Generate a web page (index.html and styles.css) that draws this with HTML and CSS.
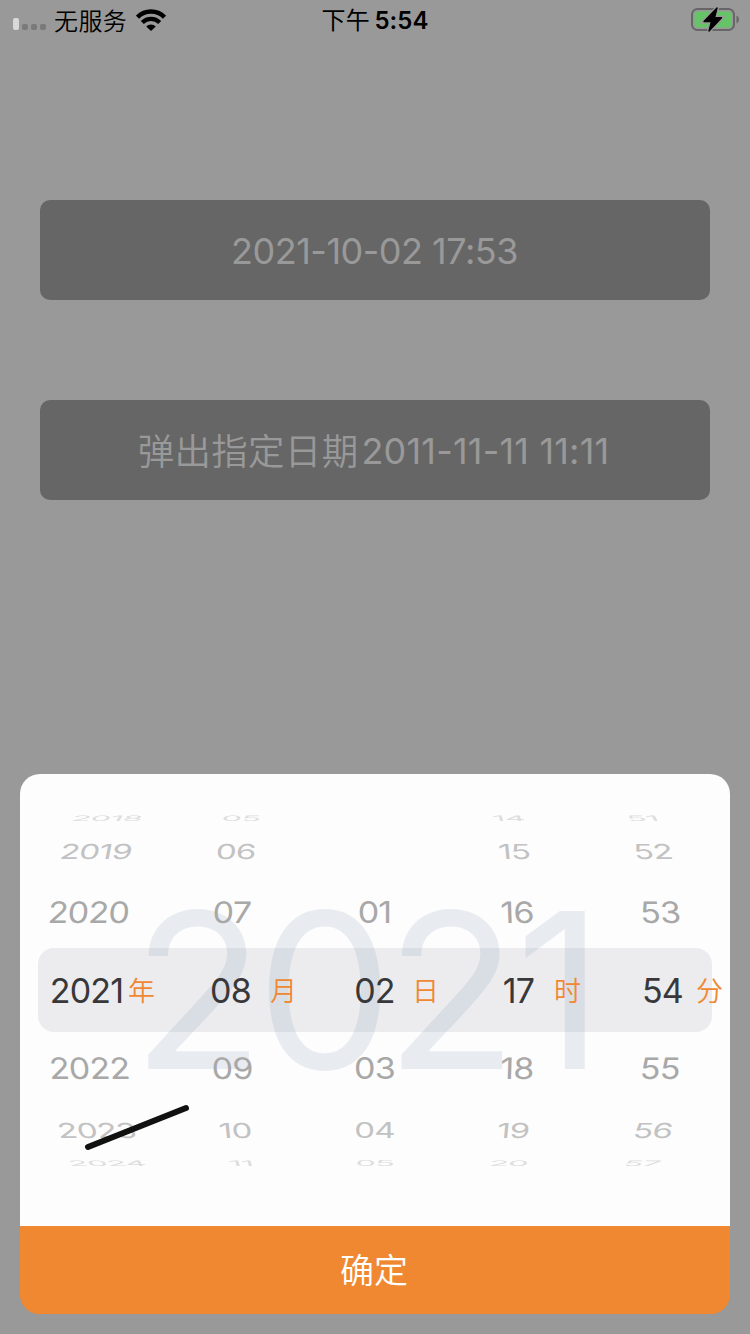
FILE: index.html
```html
<!DOCTYPE html>
<html lang="zh-CN">
<head>
<meta charset="utf-8">
<title>日期选择</title>
<link rel="stylesheet" href="styles.css">
</head>
<body>
<header class="status">
  <div class="carrier">
    <span class="signal"><i class="bar on"></i><i class="bar"></i><i class="bar"></i><i class="bar"></i></span>
    <span class="carrier-name">无服务</span>
    <svg class="wifi" width="30" height="22" viewBox="0 0 30 22">
      <path d="M1.500 8.200A19 19 0 0 1 28.500 8.200" fill="none" stroke="#000" stroke-width="4.400"/>
      <path d="M6.300 13.400A12.300 12.300 0 0 1 23.700 13.400" fill="none" stroke="#000" stroke-width="4.200"/>
      <path d="M15 22L10.200 17.400A6.800 6.800 0 0 1 19.800 17.400Z"/>
    </svg>
  </div>
  <div class="time"><span class="cjk">下午</span><span>5:54</span></div>
  <svg class="battery" width="50" height="26" viewBox="0 0 50 26">
    <rect x="2" y="3" width="42" height="21" rx="5.500" fill="none" stroke="#666" stroke-width="2"/>
    <rect x="4.500" y="5.500" width="37" height="16" rx="3.500" fill="#65c466"/>
    <path d="M46.500 9.500Q49 10.500 49 13.500T46.500 17.500Z" fill="#666"/>
    <path d="M27 2L14 15.500H21.500L19 25L31.500 11.800H24.500Z" fill="#000" stroke="#999" stroke-width="4" paint-order="stroke"/>
    <path d="M27 2L14 15.500H21.500L19 25L31.500 11.800H24.500Z" fill="#000" stroke="#000" stroke-width="1.400" stroke-linejoin="round"/>
  </svg>
</header>
<main class="buttons">
  <div class="date-button"><span class="num now">2021-10-02 17:53</span></div>
  <div class="date-button"><span class="cjk label">弹出指定日期</span><span class="num given">2011-11-11 11:11</span></div>
</main>
<section class="sheet">
  <div class="picker">
    <div class="watermark">202<span class="one">1</span></div>
    <div class="band"></div>
    <div class="wheel">
      <div class="col c1"><b class="r3 up">2018</b><b class="r2 up">2019</b><b class="r1 up">2020</b><b class="sel">2021</b><b class="r1 down">2022</b><b class="r2 down">2023</b><b class="r3 down">2024</b></div>
      <div class="col c2"><b class="r3 up">05</b><b class="r2 up">06</b><b class="r1 up">07</b><b class="sel">08</b><b class="r1 down">09</b><b class="r2 down">10</b><b class="r3 down">11</b></div>
      <div class="col c3"><b class="r3 up"></b><b class="r2 up"></b><b class="r1 up">01</b><b class="sel">02</b><b class="r1 down">03</b><b class="r2 down">04</b><b class="r3 down">05</b></div>
      <div class="col c4"><b class="r3 up">14</b><b class="r2 up">15</b><b class="r1 up">16</b><b class="sel">17</b><b class="r1 down">18</b><b class="r2 down">19</b><b class="r3 down">20</b></div>
      <div class="col c5"><b class="r3 up">51</b><b class="r2 up">52</b><b class="r1 up">53</b><b class="sel">54</b><b class="r1 down">55</b><b class="r2 down">56</b><b class="r3 down">57</b></div>
    </div>
    <div class="units"><span>年</span><span>月</span><span>日</span><span>时</span><span>分</span></div>
    <svg class="stroke" width="110" height="50" viewBox="0 0 110 50"><path d="M6 45L104 6" stroke="#111" stroke-width="6" stroke-linecap="round"/></svg>
  </div>
  <div class="confirm">确定</div>
</section>
</body>
</html>
```
FILE: styles.css
```css
* { box-sizing: border-box; }
body {
  margin: 0;
  width: 750px;
  height: 1334px;
  overflow: hidden;
  display: flex;
  flex-direction: column;
  background: #999;
  color: #000;
  font-family: Inter, "Noto Sans CJK SC", sans-serif;
}
.cjk { font-family: "Noto Sans CJK SC", sans-serif; }

.status {
  height: 40px;
  display: grid;
  grid-template: 40px / 1fr auto 1fr;
  align-items: center;
}
.carrier { display: flex; align-items: center; padding-left: 13px; }
.signal { display: flex; align-items: flex-end; gap: 3px; height: 12px; margin: 8px 8px 0 0; }
.bar { width: 6px; height: 6px; border-radius: 2px; background: #7a7a7a; }
.bar.on { height: 12px; background: #d9d9d9; }
.carrier-name { font: 350 24px/38px "Noto Sans CJK SC", sans-serif; letter-spacing: 0.4px; }
.wifi { margin-left: 9px; }
.time { display: flex; gap: 4px; font-size: 24px; line-height: 38px; font-weight: 600; letter-spacing: 0.1px; }
.time span + span { padding-top: 2px; }
.time .cjk { font-weight: 400; letter-spacing: 0.5px; }
.battery { justify-self: end; margin: 0 10px 2px 0; }

.buttons { display: flex; flex-direction: column; gap: 100px; padding: 160px 40px 0; }
.date-button {
  height: 100px;
  display: flex;
  align-items: center;
  justify-content: center;
  gap: 3px;
  border-radius: 10px;
  background: #666;
  color: #999;
  font-size: 36px;
}
.num { padding-top: 1px; }
.now { letter-spacing: -0.5px; margin-left: -1px; }
.given { letter-spacing: 0.2px; }
.label { font-weight: 350; font-size: 36.5px; letter-spacing: 0.3px; padding-bottom: 1px; margin-left: -3px; }

.sheet {
  margin: auto 20px 20px;
  height: 540px;
  border-radius: 20px;
  overflow: hidden;
  background: linear-gradient(#fdfdfd 452px, #f08831 452px);
  display: flex;
  flex-direction: column;
}
.picker {
  height: 452px;
  padding-top: 36px;
  display: grid;
  grid-template: 360px / 710px;
  align-items: center;
}
.picker > * { grid-area: 1 / 1; }
.watermark {
  padding-left: 112px;
  color: #e8ecf1;
  font-size: 217px;
  line-height: 362px;
  letter-spacing: -8px;
}
.one { margin-left: 6px; }
.band { height: 84px; margin: 0 18px; border-radius: 16px; background: rgba(93, 93, 113, 0.1); }
.wheel { display: grid; grid-template-columns: repeat(5, 144px); margin: 1px -5px 0; }
.col { display: flex; flex-direction: column; align-items: center; }

/* --lean: how far a column tilts toward the centre of the drum */
.c1 { --lean: 2; }
.c2 { --lean: 1; }
.c3 { --lean: 0; }
.c4 { --lean: -1; }
.c5 { --lean: -2; }
.col b {
  --dir: 1;
  display: flex;
  align-items: center;
  height: var(--h);
  color: var(--ink);
  font-size: 34px;
  line-height: 1;
  font-weight: 400;
  letter-spacing: -0.8px;
  transform: translateX(calc(var(--lean) * var(--shift) - 0.5px)) skewX(calc(var(--lean) * var(--dir) * var(--tilt))) scale(var(--sx), var(--sy));
}
.up.up { --dir: -1; }
.col .sel { --h: 84px; --ink: #38383a; --shift: 0px; --tilt: 0deg; --sx: 1; --sy: 1; }
.r1 { --h: 72px; --ink: #a8a8a8; --shift: 1.2px; --tilt: 2deg; --sx: 1; --sy: 0.87; }
.r2 { --h: 51px; --ink: #c2c2c2; --shift: 4.8px; --tilt: 5.5deg; --sx: 0.97; --sy: 0.61; }
.r3 { --h: 15px; --ink: #dedede; --shift: 10.3px; --tilt: 15deg; --sx: 0.95; --sy: 0.22; }

.units {
  display: grid;
  grid-template-columns: repeat(5, 142px);
  color: #f08831;
  font: 350 27px/82px "Noto Sans CJK SC", sans-serif;
}
.units span { text-align: right; padding-right: 7px; }
.stroke { align-self: end; z-index: 1; margin: 0 0 18px 62px; }
.confirm {
  flex: 1;
  background: #f08831;
  color: #fff;
  text-align: center;
  font: 350 34px/86px "Noto Sans CJK SC", sans-serif;
  padding-right: 2px;
}
```
